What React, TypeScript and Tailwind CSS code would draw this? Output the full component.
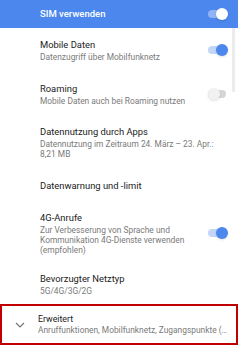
import React from 'react';

function Toggle({ on, onBar }: { on: boolean; onBar?: boolean }) {
	if (onBar) {
		return (
			<div className="relative w-[20px] h-[12px]">
				<div className="absolute left-0 top-[2px] w-[18px] h-[8px] rounded-full bg-[#8fb3f5]" />
				<div className="absolute right-0 top-0 w-[12px] h-[12px] rounded-full bg-white shadow" />
			</div>
		);
	}
	return (
		<div className="relative w-[20px] h-[12px]">
			<div
				className={`absolute left-0 top-[2px] w-[18px] h-[8px] rounded-full ${on ? 'bg-[#c3d6f8]' : 'bg-[#d6d6d6]'}`}
			/>
			<div
				className={`absolute top-0 w-[12px] h-[12px] rounded-full shadow ${on ? 'right-0 bg-[#4b87ed]' : 'left-0 bg-[#f1f1f1]'}`}
			/>
		</div>
	);
}

function Row({
	title,
	sub,
	toggle,
	className,
}: {
	title: string;
	sub?: React.ReactNode;
	toggle?: boolean | null;
	className?: string;
}) {
	return (
		<div className={`flex items-center pl-[40px] pr-[10px] ${className ?? ''}`}>
			<div className="flex-1 min-w-0">
				<div className="text-[9.4px] leading-[13px] text-[#212121] whitespace-nowrap">{title}</div>
				{sub && (
					<div className="text-[8.4px] leading-[10px] text-[#7a7a7a] mt-[1px] whitespace-nowrap">{sub}</div>
				)}
			</div>
			{toggle !== undefined && toggle !== null && (
				<div className="ml-[4px]">
					<Toggle on={toggle} />
				</div>
			)}
		</div>
	);
}

export default function App() {
	return (
		<div
			className="w-[238px] h-[345px] bg-white overflow-hidden relative"
			style={{ fontFamily: 'Roboto, "Noto Sans", sans-serif' }}
		>
			{/* top bar */}
			<div className="h-[28px] bg-[#4b87ed] flex items-center pl-[40px] pr-[10px]">
				<div className="flex-1 text-white text-[9.5px] font-medium">SIM verwenden</div>
				<Toggle on onBar />
			</div>

			{/* scrollbar */}
			<div className="absolute right-[3px] top-[28px] w-[3px] h-[64px] bg-[#ececec]" />

			<div className="flex flex-col">
				<Row className="h-[44px]" title="Mobile Daten" sub="Datenzugriff über Mobilfunknetz" toggle={true} />
				<Row className="h-[44px]" title="Roaming" sub="Mobile Daten auch bei Roaming nutzen" toggle={false} />
				<Row
					className="h-[52px]"
					title="Datennutzung durch Apps"
					sub={
						<>
							Datennutzung im Zeitraum 24. März – 23. Apr.:
							<br />
							8,21 MB
						</>
					}
				/>
				<Row className="h-[34px]" title="Datenwarnung und -limit" />
				<Row
					className="h-[62px]"
					title="4G-Anrufe"
					sub={
						<>
							Zur Verbesserung von Sprache und
							<br />
							Kommunikation 4G-Dienste verwenden
							<br />
							(empfohlen)
						</>
					}
					toggle={true}
				/>
				<Row className="h-[40px]" title="Bevorzugter Netztyp" sub="5G/4G/3G/2G" />
				<div className="h-[41px] border-2 border-[#c00000] flex items-center">
					<div className="w-[36px] flex justify-center">
						<svg width="10" height="6" viewBox="0 0 10 6" fill="none">
							<path d="M1 1l4 4 4-4" stroke="#757575" strokeWidth="1.2" />
						</svg>
					</div>
					<div className="flex-1 min-w-0 pr-[4px]">
						<div className="text-[8.8px] leading-[12px] text-[#212121]">Erweitert</div>
						<div className="text-[8.4px] leading-[11px] text-[#7a7a7a] truncate">
							Anruffunktionen, Mobilfunknetz, Zugangspunkte (APN)
						</div>
					</div>
				</div>
			</div>
		</div>
	);
}
